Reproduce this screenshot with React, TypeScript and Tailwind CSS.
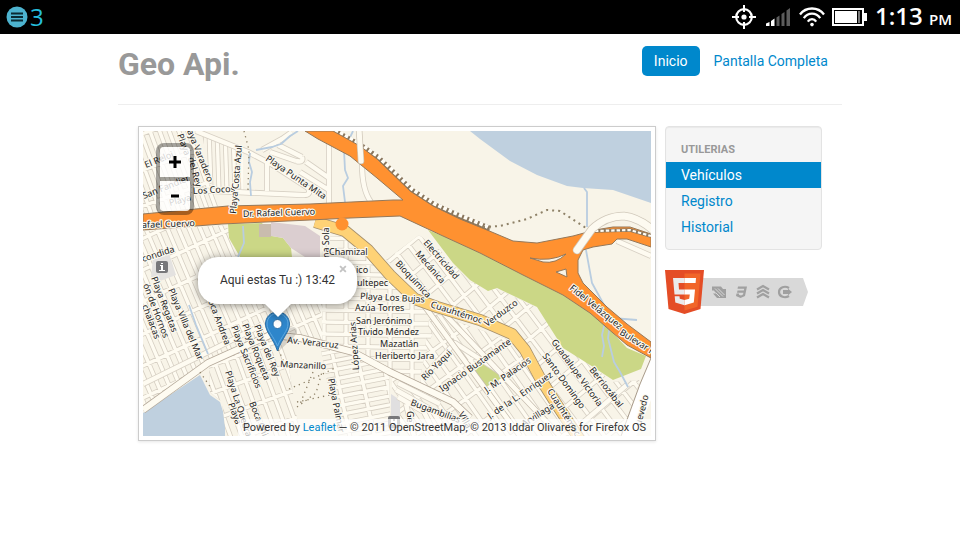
import React from "react";

type Grid = {
  id: string;
  area: string;
  origin: [number, number];
  along: number;
  across: number;
  gapAcross: number;
  gapAlong: number;
};

type Label = [text: string, x: number, y: number, angle: number];

const grids: Grid[] = [
  { id: "reloj", area: "143,131 192,131 222,206 143,214", origin: [150, 131], along: 70, across: -20, gapAcross: 9, gapAlong: 34 },
  { id: "costa", area: "202,134 243,150 243,190 213,190", origin: [211, 190], along: 88, across: 2, gapAcross: 8, gapAlong: 90 },
  { id: "regatas", area: "143,231 226,225 240,257 322,257 322,342 268,336 208,364 143,410", origin: [160, 262], along: 67, across: -25, gapAcross: 10, gapAlong: 29 },
  { id: "roqueta", area: "209,365 272,335 286,350 300,436 226,436 222,402 210,392", origin: [226, 360], along: 70, across: -20, gapAcross: 11, gapAlong: 26 },
  { id: "chamizal", area: "322,236 345,236 372,262 412,302 440,314 428,346 418,384 355,351 322,343", origin: [324, 262], along: 90, across: 1, gapAcross: 22, gapAlong: 12 },
  { id: "palmas", area: "320,346 354,354 389,373 391,436 338,436", origin: [332, 352], along: 78, across: -11, gapAcross: 24, gapAlong: 9 },
  { id: "mecanica", area: "419,235 440,250 470,282 497,289 538,308 566,344 612,382 640,380 622,436 585,436 548,380 524,340 440,300 386,260", origin: [419, 236], along: 53, across: -40, gapAcross: 14, gapAlong: 25 },
  { id: "bustamante", area: "430,312 515,342 545,388 574,436 392,436 392,376 420,386", origin: [437, 312], along: 55, across: -36, gapAcross: 13, gapAlong: 29 },
];

function gridPath(g: Grid) {
  const rad = Math.PI / 180;
  const u = [Math.cos(g.along * rad), Math.sin(g.along * rad)];
  const v = [Math.cos(g.across * rad), Math.sin(g.across * rad)];
  const [ox, oy] = g.origin;
  const reach = 300;
  const parts: string[] = [];
  const line = (x: number, y: number, d: number[]) =>
    parts.push(
      `M${Math.round(x - d[0] * reach)} ${Math.round(y - d[1] * reach)}L${Math.round(x + d[0] * reach)} ${Math.round(y + d[1] * reach)}`,
    );
  for (let i = -22; i <= 22; i++) {
    line(ox + v[0] * i * g.gapAcross, oy + v[1] * i * g.gapAcross, u);
    line(ox + u[0] * i * g.gapAlong, oy + u[1] * i * g.gapAlong, v);
  }
  return parts.join("");
}

const minorRoads = [
  "M196 131L248 152L271 164L308 188Q312 196 302 195L191 190",
  "M267 163V191",
  "M262 150L282 139L292 132M270 152L296 161M278 145L302 157M296 161Q304 163 302 157",
  "M329 143V204",
  "M300 172L329 190M306 162L329 178",
  "M362 164Q362 190 371 202",
  "M143 384L208 352L262 325",
  "M425 375L455 343L500 372",
  "M398 383L440 404M396 390L432 410L448 436M398 397L424 412L436 436M406 404L414 436",
  "M617 241L651 256",
  "M628 384L580 425",
];

const labels: Label[] = [
  ["El Reloj", 146, 168, -22],
  ["San Fandier", 144, 199, -22],
  ["Playa", 170, 206, -15],
  ["Los Cocos", 193, 194, -3],
  ["aya Varadero", 187, 131, 68],
  ["Playa", 177, 135, 70],
  ["del Rey", 188, 158, 75],
  ["Playa Costa Azul", 236, 214, -85],
  ["Playa Punta Mita", 265, 160, 34],
  ["Dr. Rafael Cuervo", 243, 217, -2],
  ["afael Cuervo", 142, 228, -2],
  ["condida", 143, 262, -18],
  ["Playa Regatas", 151, 278, 69],
  ["Playa Villa del Mar", 168, 290, 67],
  ["ón de Hornos", 143, 285, 69],
  ["chalacas", 142, 306, 69],
  ["oca Andrea", 208, 301, 69],
  ["Playa Sacrificios", 231, 327, 68],
  ["Playa Roqueta", 242, 325, 68],
  ["Playa del Rey", 254, 326, 68],
  ["Playa La Quebrada", 225, 372, 72],
  ["Playa", 228, 404, 70],
  ["Boca Chica", 249, 403, 68],
  ["Av. Veracruz", 287, 343, 6],
  ["Manzanillo", 280, 367, 3],
  ["Playa Palmar", 328, 379, 79],
  ["López Arias", 359, 370, -94],
  ["ma Sola", 329, 261, -90],
  ["Chamizal", 329, 255, 0],
  ["ico", 356, 273, 0],
  ["ultepec", 357, 286, 0],
  ["Playa Los Bujas", 360, 299, 3],
  ["Azúa Torres", 355, 311, 0],
  ["San Jerónimo", 356, 324, 0],
  ["Tivido Méndez", 358, 335, 0],
  ["Mazatlán", 380, 347, 0],
  ["Heriberto Jara", 375, 359, 0],
  ["Bioquímica", 395, 264, 47],
  ["Electricidad", 423, 243, 49],
  ["Mecánica", 415, 254, 49],
  ["Cuauhtémoc", 430, 307, 18],
  ["Verduzco", 487, 327, -36],
  ["Fidel Velázquez", 569, 289, 39],
  ["Bulevar F", 619, 334, 32],
  ["Río Yaqui", 425, 381, -45],
  ["Ignacio Bustamante", 442, 392, -35],
  ["J. M. Palacios", 487, 393, -35],
  ["J. de la L. Enriquez", 490, 419, -34],
  ["Guadalupe Victoria", 551, 342, 54],
  ["Santo Domingo", 542, 356, 54],
  ["Berriozábal", 589, 370, 52],
  ["Cuauhtémoc", 547, 391, 58],
  ["Arvillaga", 524, 427, -32],
  ["uevedo", 641, 426, -76],
  ["Bugambilias", 410, 405, 20],
  ["Ge", 407, 411, 90],
  ["Villa", 458, 414, 60],
];

const highway =
  "M305 131L333 131L360 146L377 159L410 191L433 206L460 219L487 230L513 241L537 243L573 236L595 230L613 227L630 227L651 234V247L627 239L617 239L612 244L593 247L583 250L578 260L578 273L583 283L607 307L627 324L651 342V358L627 345L613 333L590 313L563 295L523 275L480 253L443 236L400 216L350 218L310 220L222 224L143 230V214L228 206L310 204L393 200L403 200L377 178L350 156L318 139Z";

const veracruz = "M143 410L208 363L270 335L300 338L353 352L390 372L453 402L470 418";
const cuauhtemoc = "M315 222L345 231L368 250L390 275L415 299L437 307L480 320L512 334L525 350L540 378L557 405L580 440";
const avenues = "M420 300L520 436M395 280L420 300M437 306L560 436";

function StreetMap() {
  return (
    <svg
      className="block h-full w-full"
      viewBox="143 131 508 305"
      preserveAspectRatio="xMidYMid slice"
      role="img"
      aria-label="Mapa"
    >
      <defs>
        {grids.map((g) => (
          <clipPath id={g.id} key={g.id}>
            <polygon points={g.area} />
          </clipPath>
        ))}
      </defs>
      <rect x="143" y="131" width="508" height="305" fill="#f8f4e8" />
      <path d="M470 131L480 139L510 161L537 175L567 186L583 188L613 190L651 203V131Z" fill="#bfd0df" />
      <path d="M143 413L200 375L210 395L220 402L225 418V436H143Z" fill="#bfd0df" />

      {grids.map((g) => {
        const d = gridPath(g);
        return (
          <g key={g.id} clipPath={`url(#${g.id})`} fill="none">
            <path d={d} stroke="#d6cfc3" strokeWidth="5" />
            <path d={d} stroke="#fefbf1" strokeWidth="3.4" />
          </g>
        );
      })}

      <path d="M153 257L169 253L176 275L160 281L151 277Z" fill="#e4e2e0" />
      <path d="M391 394L400 400V436H391Z" fill="#e0dfe0" />
      <path d="M228 224L229 238L240 257H292L291 248L283 238L272 236L262 223Z" fill="#cbd786" />
      <path d="M271 222L305 226L320 236V257H305L291 248L283 238L271 236Z" fill="#dbced0" />
      <rect x="259" y="224" width="12" height="13" fill="#c9bcae" />
      <path
        d="M428 230L443 236L480 253L523 275L563 295L590 313L613 333L627 348L646 356L641 369L613 380L590 365L563 348L537 307L497 288L488 291L470 280L453 263Z"
        fill="#cbd786"
      />
      <path d="M474 372L487 358L502 378L484 388Z" fill="#cbd786" />

      <g fill="none" strokeLinejoin="round">
        <path d={minorRoads.join("")} stroke="#d6cfc3" strokeWidth="6" />
        <path d={minorRoads.join("")} stroke="#fefbf1" strokeWidth="4.4" />
        <path d={veracruz} stroke="#b3a798" strokeWidth="7.5" />
        <path d={veracruz} stroke="#fefbf1" strokeWidth="6" />
        <path d={avenues} stroke="#c6bcae" strokeWidth="6" />
        <path d={avenues} stroke="#fefbf1" strokeWidth="4.6" />
      </g>
      <path d="M651 360L640 385L622 436H636L651 400Z" fill="#fff" />
      <path d="M651 358L640 384L621 436" fill="none" stroke="#a89b8c" />

      <g fill="none" stroke="#b9cde0" strokeWidth="1.8" strokeLinejoin="round">
        <path d="M298 131L290 136L281 144L272 147L256 150M250 153L249 162L252 172L250 182L251 196" />
        <path d="M353 131L344 150L345 170L348 178L343 186L345 202" />
        <path d="M584 188L587 192L587 227M586 250L592 283L603 303L612 318L637 320" />
        <path d="M243 226L244 243L238 257M189 305L196 325L208 354" />
        <path d="M605 322L602 335L604 346L602 357M610 325L608 338L614 362L620 372L628 387" />
      </g>
      <path
        d="M244 131L249 150L248 190M289 389L310 380L335 368M297 407L316 393L322 372M297 402L330 395M200 372L211 388M276 345L286 366M313 372L300 404"
        fill="none"
        stroke="#8f8268"
        strokeWidth="1.3"
        strokeDasharray="1.3 4"
      />

      <g fill="none" strokeLinejoin="round">
        <path d={cuauhtemoc} stroke="#a58f6c" strokeWidth="12" />
        <path d={cuauhtemoc} stroke="#fed276" strokeWidth="10.4" />
        <path d="M334 131L361 146L378 158L411 190L434 205L461 217L483 226L490 229" stroke="#8a775e" strokeWidth="6" />
        <path d="M335 130L362 145L379 157L412 189L435 204L462 216L484 225L490 228" stroke="#fffdf6" strokeWidth="4" strokeDasharray="3.6 2" />
        <path d="M483 227L500 226L527 219L547 210L560 211L586 228" stroke="#8f8268" strokeWidth="2" strokeDasharray="2 4" />
      </g>
      <path d={highway} fill="#ff9130" stroke="#94785a" strokeWidth="1" />
      <circle cx="342" cy="224" r="6.5" fill="#ff9130" />
      <path d="M530 258Q550 262 566 254Q556 264 543 262ZM556 272L566 269L567 277Z" fill="#f8f4e8" stroke="#94785a" />
      <path d="M595 231L630 230L651 236" fill="none" stroke="#8a775e" strokeWidth="3.4" />
      <path d="M595 231L630 230L651 236" fill="none" stroke="#fffdf6" strokeWidth="2.2" strokeDasharray="3.4 2" />
      <g fill="none" strokeLinecap="round" strokeLinejoin="round">
        <path d="M577 250L592 229Q606 216 624 216Q640 218 655 232" stroke="#cfc7b9" strokeWidth="8.5" />
        <path d="M577 250L592 229Q606 216 624 216Q640 218 655 232" stroke="#fdfaf0" strokeWidth="7" />
        <path d="M359 128L361 161" stroke="#cfc7b9" strokeWidth="6.5" />
        <path d="M359 128L361 161" stroke="#fdfaf0" strokeWidth="5" />
      </g>

      <g>
        <rect x="156" y="261" width="12" height="12" rx="2" fill="#77777a" />
        <path d="M160 265h3v5h2v1h-6v-1h2v-4h-1zM161 263h2v1h-2z" fill="#fff" />
        <rect x="388" y="416" width="12" height="12" rx="2" fill="#77777a" />
        <path d="M391 419h2v2h2v-2h2v6h-2v-2h-2v2h-2z" fill="#fff" />
      </g>

      <g
        className="font-['Noto_Sans',sans-serif] text-[9px]"
        fill="#222"
        stroke="#fbf8ef"
        strokeWidth="2.4"
        strokeLinejoin="round"
        style={{ paintOrder: "stroke" }}
      >
        {labels.map(([text, x, y, angle]) => (
          <text key={`${text}-${x}-${y}`} transform={`translate(${x} ${y}) rotate(${angle})`}>
            {text}
          </text>
        ))}
      </g>
    </svg>
  );
}

function Marker() {
  return (
    <svg className="absolute top-[180px] left-[121px] h-[42px] w-[46px]" viewBox="0 0 46 42" aria-hidden="true">
      <path d="M15 40L30 26Q36 18 30 16Q22 16 18 26Z" fill="#000" opacity="0.14" />
      <path
        d="M13.500 1C6.500 1 1.500 6.200 1.500 13C1.500 21 9 27 13.500 40C18 27 25.500 21 25.500 13C25.500 6.200 20.500 1 13.500 1Z"
        fill="#2e86cb"
        stroke="#2a6fa8"
      />
      <path d="M13.500 2.500C7.500 2.500 3 7 3 13C3 20 9.500 25 13.500 35C17.500 25 24 20 24 13C24 7 19.500 2.500 13.500 2.500Z" fill="none" stroke="#5fa8df" />
      <circle cx="13.500" cy="13" r="4.500" fill="#fff" stroke="#2a6fa8" />
    </svg>
  );
}

function Popup() {
  return (
    <div className="absolute top-[126px] left-[55px] flex w-[159px] flex-col items-center drop-shadow-[0_1px_4px_rgba(0,0,0,0.45)]">
      <div className="relative flex h-[47px] w-full items-center justify-center rounded-[20px] bg-white pb-[2px] text-[12px] leading-[18px] text-[#333]">
        Aqui estas Tu :) 13:42
        <button
          type="button"
          aria-label="Cerrar"
          className="absolute top-1 right-2 h-4 w-3 text-[15px] leading-4 font-bold text-[#c3c3c3]"
        >
          ×
        </button>
      </div>
      <svg className="block h-[13px] w-[26px]" viewBox="0 0 26 13" aria-hidden="true">
        <path d="M0 0H26L13 13Z" fill="#fff" />
      </svg>
    </div>
  );
}

function MapPanel() {
  return (
    <section className="min-w-0 flex-1 border border-[#ccc] bg-white p-1 shadow-[0_1px_3px_rgba(0,0,0,0.1)]">
      <div className="relative h-[305px] overflow-hidden">
        <StreetMap />
        <div className="absolute top-3 left-[13px] rounded-[8px] border-4 border-black/35">
          <button type="button" aria-label="Acercar" className="flex h-[30px] w-[30px] items-center justify-center rounded-t bg-white/80">
            <svg className="h-3 w-3" viewBox="0 0 12 12" aria-hidden="true">
              <path d="M6 0V12M0 6H12" stroke="#000" strokeWidth="3" />
            </svg>
          </button>
          <div className="h-1 bg-black/35" />
          <button type="button" aria-label="Alejar" className="flex h-[30px] w-[30px] items-center justify-center rounded-b bg-white/80">
            <svg className="h-3 w-2" viewBox="0 0 8 12" aria-hidden="true">
              <path d="M0 6H8" stroke="#000" strokeWidth="3" />
            </svg>
          </button>
        </div>
        <Marker />
        <Popup />
        <p className="absolute right-0 bottom-0 bg-white/70 px-[5px] text-[11px] leading-[17px] whitespace-nowrap text-[#333]">
          Powered by{" "}
          <a href="#leaflet" className="text-[#0088cc]">
            Leaflet
          </a>{" "}
          — © 2011 OpenStreetMap, © 2013 Iddar Olivares for Firefox OS
        </p>
      </div>
    </section>
  );
}

function StatusBar() {
  return (
    <div className="flex h-[34px] items-center justify-between bg-black pr-2 pl-[6px] font-['Open_Sans',sans-serif]">
      <div className="flex items-center gap-[2px]">
        <svg className="h-[22px] w-[22px]" viewBox="0 0 22 22" aria-hidden="true">
          <circle cx="11" cy="11" r="10.500" fill="#4db3cf" />
          <path d="M5 7.500H17M5 11H17M5 14.500H17" stroke="#0b2a33" strokeWidth="1.800" />
        </svg>
        <span className="text-[24px] leading-[34px] text-[#26bddb]">3</span>
      </div>
      <div className="flex items-center text-white">
        <svg className="h-6 w-6" viewBox="0 0 24 24" fill="none" stroke="#fff" aria-hidden="true">
          <circle cx="12" cy="12" r="7.800" strokeWidth="2.200" />
          <path d="M12 0V7M12 17V24M0 12H7M17 12H24" strokeWidth="2" />
          <circle cx="12" cy="12" r="2.600" fill="#fff" stroke="none" />
        </svg>
        <svg className="ml-[10px] h-[18px] w-6" viewBox="0 0 24 18" aria-hidden="true">
          <path d="M0 18V15.500L3.500 14V18ZM5 18V13L8.500 10.500V18Z" fill="#fff" />
          <path d="M10.500 18V9.500L13.500 7.500V18ZM15.500 18V6L18.500 4V18ZM20.500 18V2.500L24 0V18Z" fill="#5c5c5c" />
        </svg>
        <svg className="ml-[9px] h-5 w-[26px]" viewBox="0 0 26 20" fill="none" stroke="#fff" aria-hidden="true">
          <path d="M1 7.500C7 -0.500 19 -0.500 25 7.500M4.800 11.200C9 5.200 17 5.200 21.200 11.200M8.800 14.600C11 11.200 15 11.200 17.200 14.600" strokeWidth="2.300" />
          <circle cx="13" cy="17.600" r="1.800" fill="#fff" stroke="none" />
        </svg>
        <svg className="ml-[7px] h-[18px] w-[35px]" viewBox="0 0 35 18" aria-hidden="true">
          <rect x="1" y="1" width="30" height="16" fill="none" stroke="#fff" strokeWidth="2" />
          <rect x="3" y="3" width="22" height="12" fill="#fff" />
          <rect x="26" y="3" width="2" height="12" fill="#777" />
          <rect x="32" y="5" width="3" height="8" fill="#fff" />
        </svg>
        <p className="ml-2 text-[24px] leading-[34px] font-semibold">
          1:13 <span className="text-[15px]">PM</span>
        </p>
      </div>
    </div>
  );
}

function Html5Badge() {
  return (
    <a href="#html5" aria-label="HTML5" className="block">
      <svg className="block h-11 w-[143px]" viewBox="0 0 143 44" aria-hidden="true">
        <path d="M36 8H138L143 22L138 36H34Z" fill="#d9d9d9" />
        <path d="M0 0H39L35.500 39L19.500 44L3.500 39Z" fill="#e44d26" />
        <path d="M19.500 3.500H35.500L32.500 36.800L19.500 40.500Z" fill="#f16529" />
        <path d="M19.500 8H8L9.500 24.500H19.500V19.600H14L13.500 13H19.500ZM19.500 30L14.800 28.700L14.500 26.200H9.700L10.300 32.500L19.500 35.200Z" fill="#ebebeb" />
        <path d="M19.500 8H31L30.600 13H19.500ZM19.500 19.600H30L28.800 32.500L19.500 35.200V30L24.200 28.700L24.800 24.500H19.500Z" fill="#fff" />
        <path d="M47 16.500H56L58 19H61V28H52L48 23.500H51L49 20.500H47Z" fill="#a0a0a0" />
        <path d="M50 18.500L58 26.500M53 18.500L59.500 25M50.500 22.500L55 27" stroke="#d9d9d9" strokeWidth="1" />
        <path d="M73 16.500H82L80 26L75.500 28L71 26L71.500 23.500H74L74 24.800L76 25.500L78 24.600L78.400 22.800H72L72.500 20.600H78.800L79.200 18.800H72.500Z" fill="#a0a0a0" />
        <path d="M92 19.500L98 16L104 19.500M92 23.500L98 20L104 23.500M92 27.500L98 24L104 27.500" fill="none" stroke="#a0a0a0" strokeWidth="2.200" />
        <path d="M124 18C120 15.500 114 17 114 22C114 27 120 28.500 124 26" fill="none" stroke="#a0a0a0" strokeWidth="2.200" />
        <path d="M118 20H123V18.800L127 22L123 25.200V24H118Z" fill="#a0a0a0" />
      </svg>
    </a>
  );
}

function Sidebar() {
  return (
    <aside className="flex w-[157px] shrink-0 flex-col gap-5">
      <nav
        aria-labelledby="utilerias"
        className="rounded border border-[#e3e3e3] bg-[#f5f5f5] py-[9px] text-[14px] leading-5 shadow-[inset_0_1px_1px_rgba(0,0,0,0.05)]"
      >
        <h2 id="utilerias" className="px-[15px] pt-1 pb-[2px] text-[11px] leading-5 font-bold text-[#999]">
          UTILERIAS
        </h2>
        <ul>
          <li>
            <a href="#vehiculos" aria-current="page" className="block bg-[#0088cc] px-[15px] py-[3px] text-white">
              Vehículos
            </a>
          </li>
          <li>
            <a href="#registro" className="block px-[15px] py-[3px] text-[#0088cc]">
              Registro
            </a>
          </li>
          <li>
            <a href="#historial" className="block px-[15px] py-[3px] text-[#0088cc]">
              Historial
            </a>
          </li>
        </ul>
      </nav>
      <Html5Badge />
    </aside>
  );
}

export default function App() {
  return (
    <div className="min-h-screen bg-white font-[Roboto,sans-serif] text-[#333]">
      <StatusBar />
      <div className="mx-auto max-w-[724px]">
        <header className="flex items-start justify-between border-b border-[#eee] pt-3 pb-6">
          <h1 className="pt-[2px] text-[32px] leading-8 font-bold text-[#999]">Geo Api.</h1>
          <nav className="mr-[2px] flex gap-[2px] text-[14px] leading-[14px]">
            <a href="#inicio" className="self-start rounded-[5px] bg-[#0088cc] px-3 py-2 text-white">
              Inicio
            </a>
            <a href="#pantalla" className="self-start rounded-[5px] px-3 py-2 text-[#0088cc]">
              Pantalla Completa
            </a>
          </nav>
        </header>
        <main className="flex items-start gap-[9px] px-5 pt-[21px]">
          <MapPanel />
          <Sidebar />
        </main>
      </div>
    </div>
  );
}
